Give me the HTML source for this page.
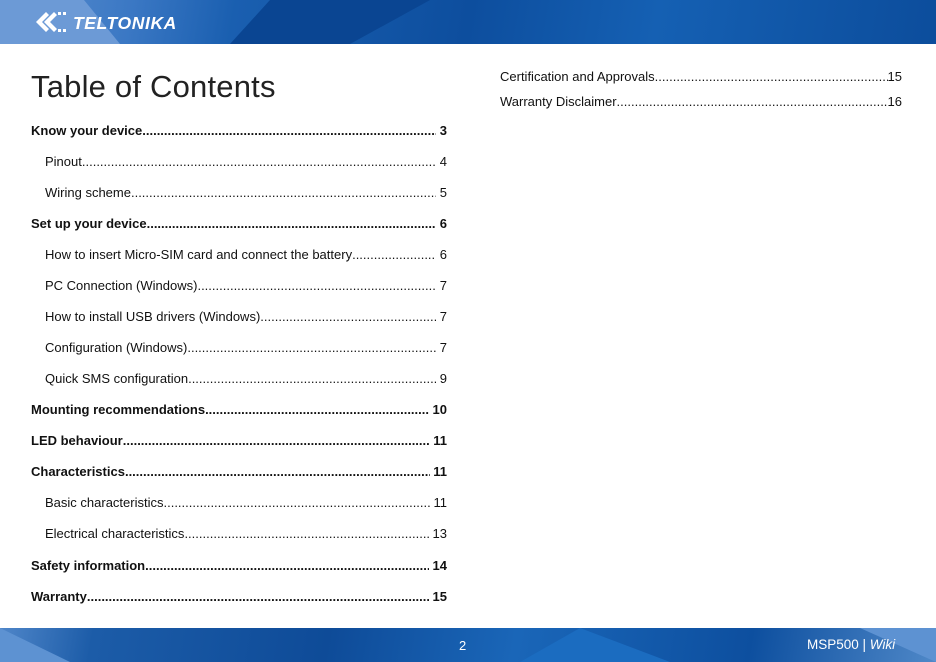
<!DOCTYPE html><html><head><style>
*{margin:0;padding:0;box-sizing:border-box}
body{width:936px;height:662px;position:relative;background:#fff;font-family:"Liberation Sans",sans-serif;color:#111;overflow:hidden}
.hdr{position:absolute;left:0;top:0;width:936px;height:44px;background:linear-gradient(100deg,#5b8fcf 0,#3b78c4 14%,#1a5fb0 25%,#0d4e9e 50%,#1560b3 70%,#0c4d9c 100%);overflow:hidden}
.ftr{position:absolute;left:0;top:628px;width:936px;height:34px;background:linear-gradient(100deg,#4f86c9 0,#1c5ca8 10%,#0e4b98 35%,#1a66b8 55%,#0d4f9f 80%,#4f88c8 100%);overflow:hidden}
.logo{position:absolute;left:73px;top:13px;color:#fff;font-weight:bold;font-style:italic;font-size:17.5px;letter-spacing:.6px}
.title{position:absolute;left:31px;top:69px;font-size:31px;color:#222;font-weight:normal;letter-spacing:.2px}
.row{position:absolute;display:flex;font-size:13px;height:16px;line-height:16px;white-space:nowrap}
.row .t{flex:none}
.row .d{flex:1;overflow:hidden}
.row .d::after{content:"................................................................................................................................................................................................................................................"}
.row .p{flex:none}
.b{font-weight:bold;font-size:13px}
</style></head><body>
<div class="hdr">
<div style="position:absolute;left:0;top:0;width:120px;height:44px;background:#6c9ad6;clip-path:polygon(0 0,70% 0,100% 100%,0 100%)"></div>
<div style="position:absolute;left:230px;top:0;width:200px;height:44px;background:#0a4592;clip-path:polygon(20% 0,100% 0,60% 100%,0 100%)"></div>
<svg style="position:absolute;left:36px;top:10px" width="34" height="24" viewBox="0 0 34 24" fill="#fff"><path d="M10 2l3 3-7 7 7 7-3 3L0 12z M18 2l3 3-7 7 7 7-3 3L8 12z"/><rect x="22" y="2" width="3" height="3"/><rect x="27" y="2" width="3" height="3"/><rect x="22" y="19" width="3" height="3"/><rect x="27" y="19" width="3" height="3"/></svg>
<div class="logo">TELTONIKA</div>
</div>
<div class="title">Table of Contents</div>

<div class="row b" style="left:31px;width:416px;top:123px"><span class="t">Know your device</span><span class="d"></span><span class="p">&nbsp;3</span></div>
<div class="row" style="left:45px;width:402px;top:154px"><span class="t">Pinout</span><span class="d"></span><span class="p">&nbsp;4</span></div>
<div class="row" style="left:45px;width:402px;top:185px"><span class="t">Wiring scheme</span><span class="d"></span><span class="p">&nbsp;5</span></div>
<div class="row b" style="left:31px;width:416px;top:216px"><span class="t">Set up your device</span><span class="d"></span><span class="p">&nbsp;6</span></div>
<div class="row" style="left:45px;width:402px;top:247px"><span class="t">How to insert Micro-SIM card and connect the battery</span><span class="d"></span><span class="p">&nbsp;6</span></div>
<div class="row" style="left:45px;width:402px;top:278px"><span class="t">PC Connection (Windows)</span><span class="d"></span><span class="p">&nbsp;7</span></div>
<div class="row" style="left:45px;width:402px;top:309px"><span class="t">How to install USB drivers (Windows)</span><span class="d"></span><span class="p">&nbsp;7</span></div>
<div class="row" style="left:45px;width:402px;top:340px"><span class="t">Configuration (Windows) </span><span class="d"></span><span class="p">&nbsp;7</span></div>
<div class="row" style="left:45px;width:402px;top:371px"><span class="t">Quick SMS configuration</span><span class="d"></span><span class="p">&nbsp;9</span></div>
<div class="row b" style="left:31px;width:416px;top:402px"><span class="t">Mounting recommendations </span><span class="d"></span><span class="p">&nbsp;10</span></div>
<div class="row b" style="left:31px;width:416px;top:433px"><span class="t">LED behaviour</span><span class="d"></span><span class="p">&nbsp;11</span></div>
<div class="row b" style="left:31px;width:416px;top:464px"><span class="t">Characteristics</span><span class="d"></span><span class="p">&nbsp;11</span></div>
<div class="row" style="left:45px;width:402px;top:495px"><span class="t">Basic characteristics </span><span class="d"></span><span class="p">&nbsp;11</span></div>
<div class="row" style="left:45px;width:402px;top:526px"><span class="t">Electrical characteristics</span><span class="d"></span><span class="p">&nbsp;13</span></div>
<div class="row b" style="left:31px;width:416px;top:558px"><span class="t">Safety information</span><span class="d"></span><span class="p">&nbsp;14</span></div>
<div class="row b" style="left:31px;width:416px;top:589px"><span class="t">Warranty </span><span class="d"></span><span class="p">&nbsp;15</span></div>

<div class="row" style="left:500px;width:402px;top:69px"><span class="t">Certification and Approvals</span><span class="d"></span><span class="p">15</span></div>
<div class="row" style="left:500px;width:402px;top:94px"><span class="t">Warranty Disclaimer</span><span class="d"></span><span class="p">16</span></div>

<div class="ftr">
<div style="position:absolute;left:0;top:0;width:70px;height:34px;background:#5d92d2;clip-path:polygon(0 0,100% 100%,0 100%)"></div>
<div style="position:absolute;left:520px;top:0;width:150px;height:34px;background:#1b6cc0;clip-path:polygon(40% 0,100% 100%,0 100%)"></div>
<div style="position:absolute;left:860px;top:0;width:76px;height:34px;background:#5d92d2;clip-path:polygon(0 0,100% 0,100% 100%)"></div>
<div style="position:absolute;left:459px;top:10px;color:#fff;font-size:13px">2</div>
<div style="position:absolute;left:807px;top:9px;color:#fff;font-size:13.5px">MSP500 | <i>Wiki</i></div>
</div>
</body></html>
